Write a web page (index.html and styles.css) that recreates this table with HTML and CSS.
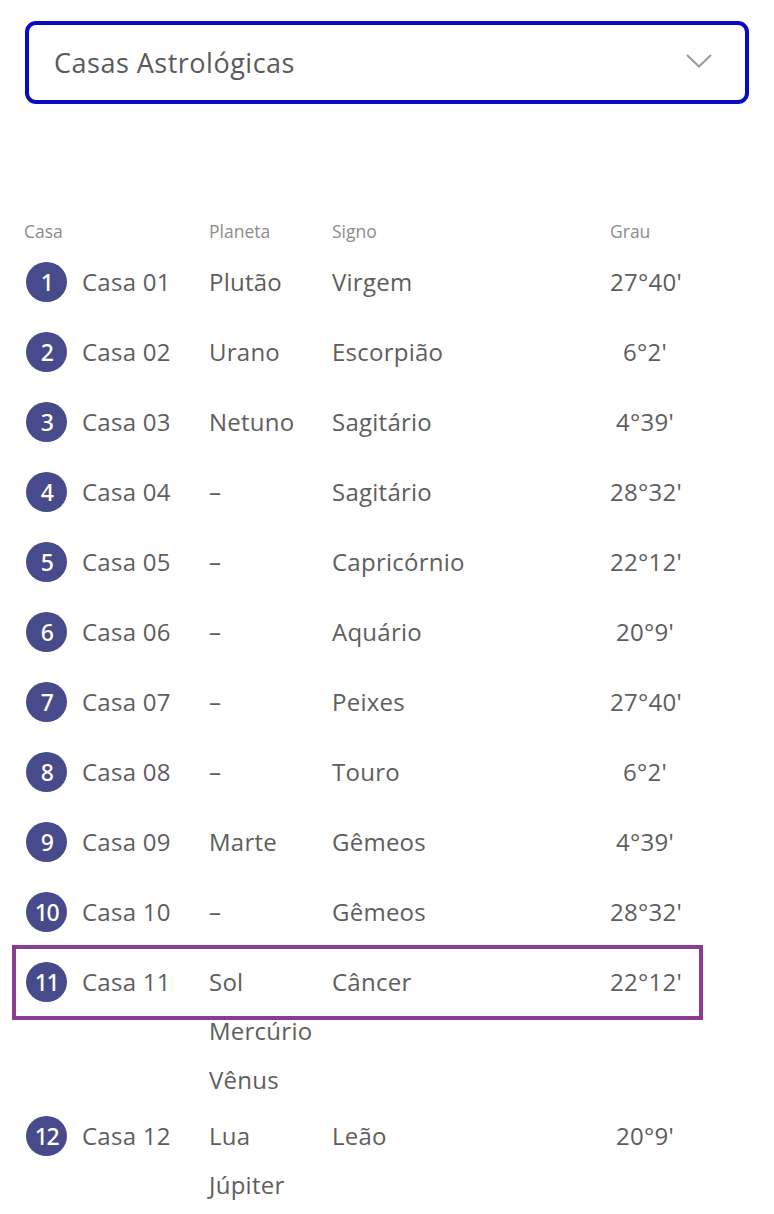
FILE: index.html
```html
<!DOCTYPE html>
<html lang="pt">
<head>
<meta charset="utf-8">
<title>Casas Astrológicas</title>
<link rel="stylesheet" href="styles.css">
</head>
<body>
<div class="page">
  <div class="select">
    <span class="select-label">Casas Astrológicas</span>
    <svg class="chevron" width="26" height="14" viewBox="0 0 26 14"><path d="M1 1 L13 12.5 L25 1" fill="none" stroke="#9a9a9a" stroke-width="2"/></svg>
  </div>

  <div class="table">
    <div class="row head">
      <div class="c-casa">Casa</div>
      <div class="c-plan">Planeta</div>
      <div class="c-sign">Signo</div>
      <div class="c-grau">Grau</div>
    </div>

    <div class="row"><div class="c-casa"><span class="num">1</span>Casa 01</div><div class="c-plan"><span>Plutão</span></div><div class="c-sign">Virgem</div><div class="c-grau val">27°40'</div></div>
    <div class="row"><div class="c-casa"><span class="num">2</span>Casa 02</div><div class="c-plan"><span>Urano</span></div><div class="c-sign">Escorpião</div><div class="c-grau val">6°2'</div></div>
    <div class="row"><div class="c-casa"><span class="num">3</span>Casa 03</div><div class="c-plan"><span>Netuno</span></div><div class="c-sign">Sagitário</div><div class="c-grau val">4°39'</div></div>
    <div class="row"><div class="c-casa"><span class="num">4</span>Casa 04</div><div class="c-plan"><span>–</span></div><div class="c-sign">Sagitário</div><div class="c-grau val">28°32'</div></div>
    <div class="row"><div class="c-casa"><span class="num">5</span>Casa 05</div><div class="c-plan"><span>–</span></div><div class="c-sign">Capricórnio</div><div class="c-grau val">22°12'</div></div>
    <div class="row"><div class="c-casa"><span class="num">6</span>Casa 06</div><div class="c-plan"><span>–</span></div><div class="c-sign">Aquário</div><div class="c-grau val">20°9'</div></div>
    <div class="row"><div class="c-casa"><span class="num">7</span>Casa 07</div><div class="c-plan"><span>–</span></div><div class="c-sign">Peixes</div><div class="c-grau val">27°40'</div></div>
    <div class="row"><div class="c-casa"><span class="num">8</span>Casa 08</div><div class="c-plan"><span>–</span></div><div class="c-sign">Touro</div><div class="c-grau val">6°2'</div></div>
    <div class="row"><div class="c-casa"><span class="num">9</span>Casa 09</div><div class="c-plan"><span>Marte</span></div><div class="c-sign">Gêmeos</div><div class="c-grau val">4°39'</div></div>
    <div class="row"><div class="c-casa"><span class="num">10</span>Casa 10</div><div class="c-plan"><span>–</span></div><div class="c-sign">Gêmeos</div><div class="c-grau val">28°32'</div></div>
    <div class="row active"><div class="c-casa"><span class="num">11</span>Casa 11</div><div class="c-plan"><span>Sol</span><span>Mercúrio</span><span>Vênus</span></div><div class="c-sign">Câncer</div><div class="c-grau val">22°12'</div></div>
    <div class="row"><div class="c-casa"><span class="num">12</span>Casa 12</div><div class="c-plan"><span>Lua</span><span>Júpiter</span></div><div class="c-sign">Leão</div><div class="c-grau val">20°9'</div></div>
  </div>
</div>
</body>
</html>
```

FILE: styles.css
```css
*, *::before, *::after { box-sizing: border-box; }
html, body { margin: 0; padding: 0; background: #fff; }
body { font-family: "Open Sans", "Liberation Sans", sans-serif; color: #5e5e5e; }

.page { padding: 21px 25px 0 24px; }

.select {
  margin-left: 1px;
  width: 724px;
  height: 83px;
  border: 4px solid #0a0ac4;
  border-radius: 11px;
  display: flex;
  align-items: center;
  justify-content: space-between;
  padding: 0 33px 0 25px;
}
.select-label { font-size: 27px; color: #5a5a5a; letter-spacing: 0.5px; }
.chevron { display: block; margin-top: -4px; }

.table { margin-top: 115px; }

.row {
  position: relative;
  display: grid;
  grid-template-columns: 185px 123px 278px 70px;
  min-height: 70px;
  padding-top: 14px;
  font-size: 24px;
  line-height: 42px;
  letter-spacing: 0.25px;
  color: #5e5e5e;
}
.row.head {
  min-height: 0;
  padding-top: 0;
  font-size: 17.5px;
  line-height: 24px;
  letter-spacing: 0;
  color: #8c8c8c;
  margin-bottom: 4px;
}
.c-casa { display: flex; align-items: center; height: 42px; }
.head .c-casa { height: 24px; }
.c-plan { display: flex; flex-direction: column; gap: 7px; }
.val { text-align: center; }

.num {
  width: 41px;
  height: 40px;
  border-radius: 50%;
  background: #474b8c;
  color: #fff;
  display: inline-flex;
  align-items: center;
  justify-content: center;
  font-family: "Noto Sans", "Open Sans", sans-serif;
  font-size: 23px;
  font-weight: 500;
  letter-spacing: -1.5px;
  margin: 0 15px 0 2px;
  line-height: 1;
}

.row.active::before {
  content: "";
  position: absolute;
  left: -12px;
  top: -2px;
  width: 691px;
  height: 75px;
  border: 4px solid #8c3a92;
  pointer-events: none;
}
```
